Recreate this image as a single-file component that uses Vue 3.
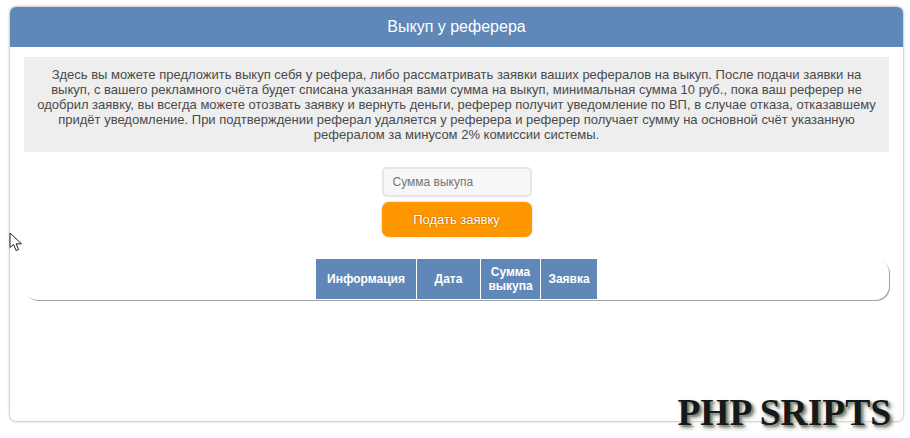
<script setup>
const columns = [
  { title: 'Информация', cls: 'col-info' },
  { title: 'Дата', cls: 'col-date' },
  { title: 'Сумма выкупа', cls: 'col-sum' },
  { title: 'Заявка', cls: 'col-req' }
]
</script>

<template>
  <div class="page">
    <div class="card">
      <div class="card-head">Выкуп у реферера</div>
      <div class="card-body">
        <div class="notice">
          Здесь вы можете предложить выкуп себя у рефера, либо рассматривать заявки ваших рефералов на выкуп. После подачи заявки на выкуп, с вашего рекламного счёта будет списана указанная вами сумма на выкуп, минимальная сумма 10 руб., пока ваш реферер не одобрил заявку, вы всегда можете отозвать заявку и вернуть деньги, реферер получит уведомление по ВП, в случае отказа, отказавшему придёт уведомление. При подтверждении реферал удаляется у реферера и реферер получает сумму на основной счёт указанную рефералом за минусом 2% комиссии системы.
        </div>
        <form class="buy-form" @submit.prevent>
          <input class="sum-input" type="text" placeholder="Сумма выкупа" />
          <button class="submit-btn" type="submit">Подать заявку</button>
        </form>
        <div class="table-wrap">
          <table class="requests">
            <thead>
              <tr>
                <th v-for="col in columns" :key="col.title" :class="col.cls">{{ col.title }}</th>
              </tr>
            </thead>
          </table>
        </div>
      </div>
    </div>

    <svg class="cursor" width="14" height="20" viewBox="0 0 14 20">
      <path d="M1 1 L1 15.5 L4.5 12.5 L7 18.5 L9.5 17.5 L7.2 11.8 L12.5 11.8 Z" fill="#fff" stroke="#222" stroke-width="1" />
    </svg>
    <div class="watermark">PHP SRIPTS</div>
  </div>
</template>

<style scoped>
.page {
  position: relative;
  width: 910px;
  height: 438px;
  padding: 7px 7px 0 10px;
  box-sizing: border-box;
  background: #fff;
  overflow: hidden;
  font-family: "Liberation Sans", Arial, sans-serif;
}

.card {
  height: 414px;
  box-sizing: border-box;
  background: #fff;
  border-radius: 6px;
  box-shadow: 0 0 3px rgba(0, 0, 0, 0.45);
}

.card-head {
  height: 40px;
  line-height: 40px;
  text-align: center;
  font-size: 16px;
  color: #fff;
  background: #5f88b8;
  border-radius: 6px 6px 0 0;
}

.card-body {
  padding: 10px 14px 0;
}

.notice {
  height: 95px;
  box-sizing: border-box;
  padding: 10px 10px 0;
  background: #eeeeee;
  color: #4a4a4a;
  font-size: 13px;
  line-height: 15px;
  text-align: center;
}

.buy-form {
  display: flex;
  flex-direction: column;
  align-items: center;
  gap: 5px;
  margin-top: 15px;
}

.sum-input {
  width: 150px;
  height: 30px;
  box-sizing: border-box;
  padding: 0 9px;
  border: 2px solid #e4e6ea;
  border-radius: 5px;
  background: #f7f7f7;
  font-family: inherit;
  font-size: 12px;
  outline: none;
}

.sum-input::placeholder {
  color: #757575;
  opacity: 1;
}

.submit-btn {
  width: 150px;
  height: 35px;
  border: 0;
  border-radius: 7px;
  background: #ff9800;
  color: #fff;
  font-family: inherit;
  font-size: 13px;
  text-shadow: 0 0 2px rgba(120, 70, 0, 0.8);
  box-shadow: 0 0 2px rgba(0, 0, 0, 0.25);
}

.table-wrap {
  display: flex;
  justify-content: center;
  align-items: flex-start;
  height: 41px;
  margin-top: 22px;
  border-radius: 14px;
  box-shadow: 1px 1px 0 #a0a0a0;
}

.requests {
  border-collapse: collapse;
  height: 40px;
}

.requests th {
  padding: 0;
  background: #5f88b8;
  color: #fff;
  font-size: 12px;
  line-height: 14px;
  font-weight: bold;
  border-left: 1px solid #fff;
}

.requests th:first-child {
  border-left: 0;
}

.col-info { width: 100px; }
.col-date { width: 63px; }
.col-sum { width: 59px; }
.col-req { width: 56px; }

.cursor {
  position: absolute;
  left: 9px;
  top: 232px;
}

.watermark {
  position: absolute;
  right: 19px;
  top: 391px;
  font-family: "Liberation Serif", "Times New Roman", serif;
  font-weight: bold;
  font-size: 37.5px;
  line-height: 44px;
  color: #14191c;
  white-space: nowrap;
  text-shadow: 2px 2px 2px #7d8570, 3px 3px 4px #9a9a90;
}
</style>
